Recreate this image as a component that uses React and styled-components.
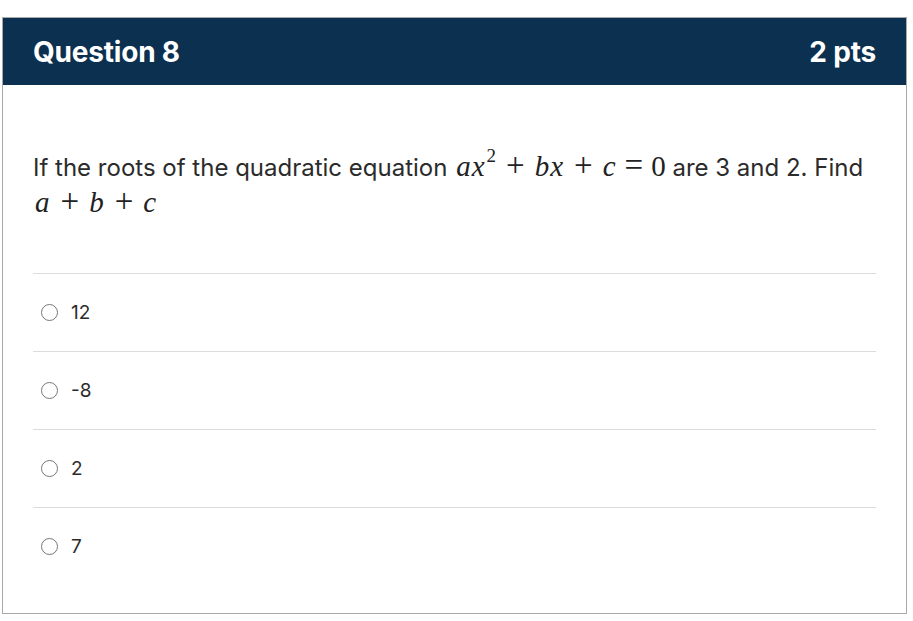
import React from "react";
import styled, { createGlobalStyle } from "styled-components";

const Global = createGlobalStyle`
  html, body { margin: 0; padding: 0; background: #fff; }
  body { font-family: Inter, "Noto Sans", sans-serif; }
`;

const Card = styled.div`
  box-sizing: border-box;
  margin: 17px 0 0 2px;
  width: 905px;
  height: 597px;
  border: 1px solid #a9a9a9;
  background: #fff;
`;

const Header = styled.div`
  box-sizing: border-box;
  height: 67px;
  background: #0b3050;
  color: #fff;
  display: flex;
  align-items: center;
  justify-content: space-between;
  padding: 0 30px;
  font-size: 28px;
  font-weight: 700;
  letter-spacing: -0.2px;
`;

const Body = styled.div`
  padding: 65px 30px 27px;
`;

const Question = styled.div`
  font-size: 24px;
  line-height: 36px;
  color: #2b2b2b;
  margin-bottom: 51px;
`;

const MathExpr = styled.span`
  font-family: "Liberation Serif", "DejaVu Serif", serif;
  font-size: 29px;
  line-height: 0;
  white-space: nowrap;
  color: #222;
  margin-left: 2px;
`;

const V = styled.i`
  font-style: italic;
  letter-spacing: 1px;
`;

const Op = styled.span`
  font-size: 33px;
  padding: 0 ${(p) => (p.$rel ? "8px" : "10px")};
`;

const Sup = styled.span`
  font-size: 19px;
  position: relative;
  top: -14px;
  margin-left: 1px;
`;

const OptionList = styled.div`
  display: flex;
  flex-direction: column;
`;

const Option = styled.label`
  display: flex;
  align-items: center;
  height: 77px;
  border-top: 1px solid #dcdcdc;
  padding-left: 8px;
  font-size: 19px;
  color: #2b2b2b;
  gap: 13px;
`;

const Radio = styled.span`
  box-sizing: border-box;
  width: 17px;
  height: 17px;
  border-radius: 50%;
  border: 1.6px solid #767676;
  background: #fff;
`;

const options = ["12", "-8", "2", "7"];

export default function App() {
  return (
    <>
      <Global />
      <Card>
        <Header>
          <span>Question 8</span>
          <span>2 pts</span>
        </Header>
        <Body>
          <Question>
            If the roots of the quadratic equation{" "}
            <MathExpr>
              <V>a</V>
              <V>x</V>
              <Sup>2</Sup>
              <Op>+</Op>
              <V>b</V>
              <V>x</V>
              <Op>+</Op>
              <V>c</V>
              <Op $rel>=</Op>0
            </MathExpr>{" "}
            are 3 and 2. Find
            <br />
            <MathExpr>
              <V>a</V>
              <Op>+</Op>
              <V>b</V>
              <Op>+</Op>
              <V>c</V>
            </MathExpr>
          </Question>
          <OptionList>
            {options.map((o) => (
              <Option key={o}>
                <Radio />
                <span>{o}</span>
              </Option>
            ))}
          </OptionList>
        </Body>
      </Card>
    </>
  );
}
